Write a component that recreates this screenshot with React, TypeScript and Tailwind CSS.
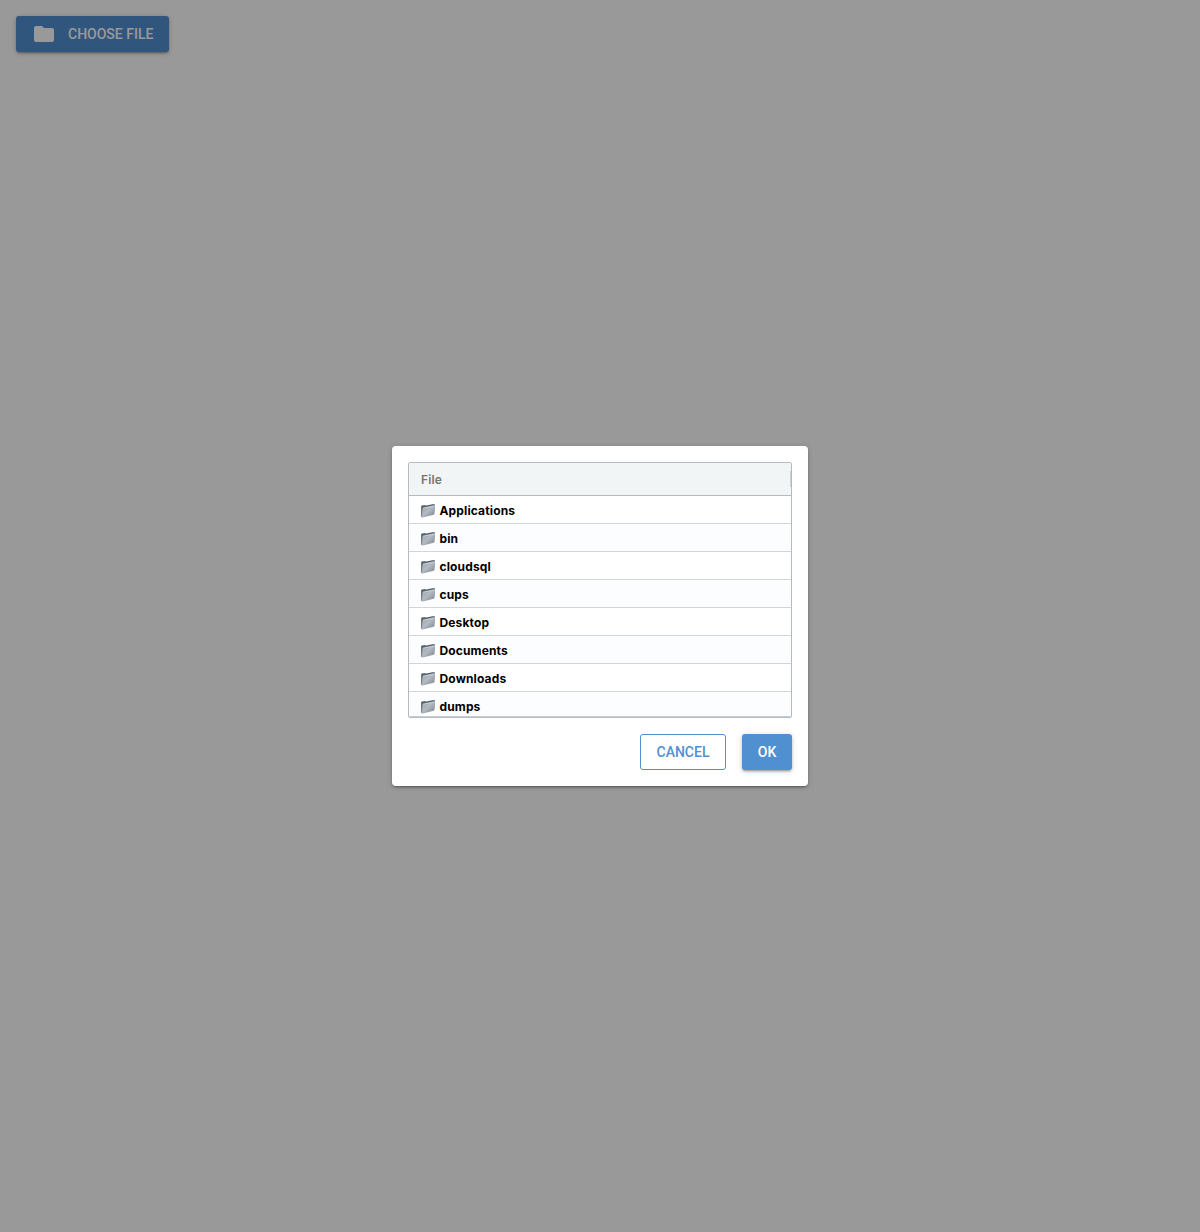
import React from 'react';

const files = ['Applications', 'bin', 'cloudsql', 'cups', 'Desktop', 'Documents', 'Downloads', 'dumps'];

const raised = 'shadow-[0_1px_5px_rgba(0,0,0,0.2),0_2px_2px_rgba(0,0,0,0.14),0_3px_1px_-2px_rgba(0,0,0,0.12)]';

function FolderGlyph() {
  return (
    <svg width="16" height="16" viewBox="0 0 16 16" className="shrink-0">
      <defs>
        <linearGradient id="folderFront" x1="0" y1="0" x2="1" y2="1">
          <stop offset="0" stopColor="#98a2ac" />
          <stop offset="0.45" stopColor="#b4bac2" />
          <stop offset="1" stopColor="#78818b" />
        </linearGradient>
      </defs>
      <path
        d="M1.1 3.4 Q1.1 2.7 1.8 2.5 L4.8 1.9 Q5.4 1.8 5.8 2.4 L14 1 Q14.8 0.9 14.8 1.7 L14.2 10.8 L2 14.3 L1.2 13.7 Z"
        fill="#596774"
      />
      <path
        d="M3 5.3 Q3.1 4.8 3.6 4.7 L14.3 2.6 Q15 2.5 14.9 3.2 L14.3 10.9 Q14.2 11.6 13.6 11.8 L2.8 14.5 Q2.1 14.6 2.2 13.9 Z"
        fill="url(#folderFront)"
      />
      <path d="M3.2 5.1 L14.6 2.9" stroke="#dde3e9" strokeWidth="0.7" />
      <path d="M2.9 5.2 L2.2 14" stroke="#ccd3da" strokeWidth="0.5" />
    </svg>
  );
}

function FileTable() {
  return (
    <div className="flex h-64 flex-col overflow-hidden rounded-[2px] border border-[#b3bac0] bg-white font-['Inter',sans-serif] text-xs">
      <div className="flex h-[33px] shrink-0 items-center justify-between border-b border-[#b3bac0] bg-[#f1f5f6] pl-3">
        <span className="pt-px font-semibold tracking-[0.12px] text-[#747676]">File</span>
        <span className="h-4 w-px bg-[#c8d2d7]" />
      </div>
      <div className="min-h-0 flex-1 overflow-hidden border-b border-[#c9ced2]">
        {files.map((name) => (
          <div
            key={name}
            className="flex h-7 items-center gap-[3.5px] border-b border-[#d0d6da] bg-white pt-[2px] pl-[11px] font-bold text-black even:bg-[#fcfdfe]"
          >
            <FolderGlyph />
            <span className="pt-px tracking-[0.14px]">{name}</span>
          </div>
        ))}
      </div>
    </div>
  );
}

export default function App() {
  return (
    <div className="relative h-[1232px] w-[1200px] overflow-hidden bg-white p-4 font-['Roboto',sans-serif]">
      <button
        className={`flex h-9 w-[153px] items-center rounded-[3px] bg-[#5090d1] pl-4 text-sm font-medium text-white ${raised}`}
      >
        <svg width="24" height="24" viewBox="0 0 24 24" fill="currentColor" className="mr-3 shrink-0">
          <path d="M10 4H4c-1.1 0-1.99.9-1.99 2L2 18c0 1.1.9 2 2 2h16c1.1 0 2-.9 2-2V8c0-1.1-.9-2-2-2h-8l-2-2z" />
        </svg>
        <span className="whitespace-nowrap">CHOOSE FILE</span>
      </button>

      <div className="absolute inset-0 flex items-center justify-center bg-black/40">
        <div
          className={`flex h-[340px] w-[416px] flex-col gap-4 rounded-[4px] bg-white p-4 ${raised}`}
        >
          <FileTable />
          <div className="flex justify-end gap-4 text-sm font-medium">
            <button className="h-9 w-[86px] rounded-[3px] border border-[#5090d1] text-[#5090d1]">CANCEL</button>
            <button className={`h-9 w-[50px] rounded-[3px] bg-[#5090d1] text-white ${raised}`}>OK</button>
          </div>
        </div>
      </div>
    </div>
  );
}
